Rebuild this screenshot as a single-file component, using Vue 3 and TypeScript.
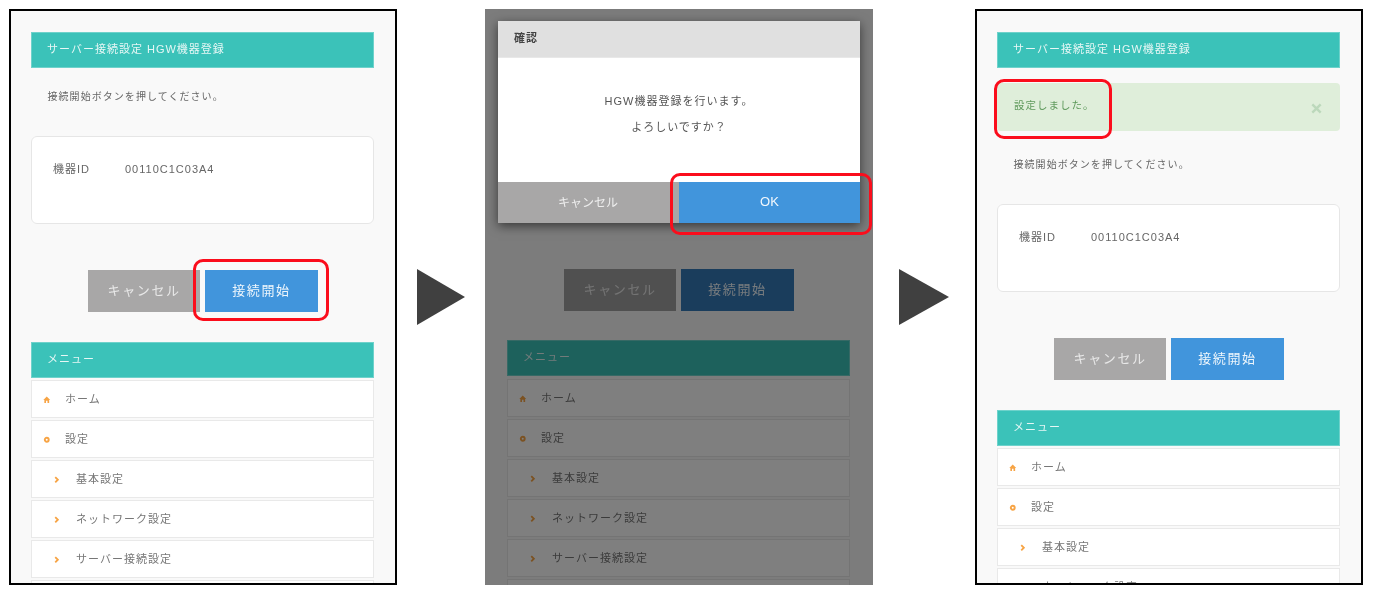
<script setup lang="ts">
type Item = { label: string; icon: 'home' | 'gear' | 'chev' }
const menu: Item[] = [
  { label: 'ホーム', icon: 'home' },
  { label: '設定', icon: 'gear' },
  { label: '基本設定', icon: 'chev' },
  { label: 'ネットワーク設定', icon: 'chev' },
  { label: 'サーバー接続設定', icon: 'chev' },
  { label: '', icon: 'chev' },
]
const panels = [
  { id: 'start', dim: false, alert: false },
  { id: 'confirm', dim: true, alert: false },
  { id: 'done', dim: false, alert: true },
]
</script>

<template>
  <div class="page">
    <template v-for="(p, i) in panels" :key="p.id">
      <div v-if="i > 0" class="arrow" :class="{ wide: i === 2 }"></div>
      <section class="panel" :class="{ dim: p.dim }">
        <div class="bar">サーバー接続設定 HGW機器登録</div>
        <div v-if="p.alert" class="alert">
          <span>設定しました。</span>
          <svg class="close" viewBox="0 0 10 10"><path d="M1.2 1.2 8.8 8.8M8.8 1.2 1.2 8.8" /></svg>
        </div>
        <p class="lead">接続開始ボタンを押してください。</p>
        <div class="card">
          <span class="key">機器ID</span><span class="val">00110C1C03A4</span>
        </div>
        <div class="actions">
          <button class="btn gray">キャンセル</button>
          <button class="btn blue">接続開始</button>
        </div>
        <div class="bar menu-bar">メニュー</div>
        <ul class="menu">
          <li v-for="(m, k) in menu" :key="k" :class="{ sub: m.icon === 'chev' }">
            <svg class="ico" viewBox="0 0 10 10">
              <path v-if="m.icon === 'home'" d="M5 .8 9.6 5.2H8.2V9.4H6V6.4H4V9.4H1.8V5.2H.4Z" fill="#f7a445" />
              <circle v-else-if="m.icon === 'gear'" cx="5" cy="5" r="2.6" fill="none" stroke="#f7a445" stroke-width="2.6" />
              <path v-else d="M3 1.5 6.5 5 3 8.5" fill="none" stroke="#f7a445" stroke-width="2.4" />
            </svg>
            <span>{{ m.label }}</span>
          </li>
        </ul>
        <template v-if="p.dim">
          <div class="shade"></div>
          <div class="dialog">
            <div class="dlg-head">確認</div>
            <div class="dlg-body">
              <p>HGW機器登録を行います。</p>
              <p>よろしいですか？</p>
            </div>
            <div class="dlg-foot">
              <button class="dlg-btn gray">キャンセル</button>
              <button class="dlg-btn blue">OK</button>
            </div>
          </div>
          <div class="mark mark-ok"></div>
        </template>
        <div v-if="p.id === 'start'" class="mark mark-start"></div>
        <div v-if="p.alert" class="mark mark-alert"></div>
      </section>
    </template>
  </div>
</template>

<style>
body {
  background: #fff;
}
</style>

<style scoped>
.page {
  display: flex;
  align-items: center;
  width: 1376px;
  height: 600px;
  box-sizing: border-box;
  padding: 9px 0 15px 9px;
  font-family: "Liberation Sans", "Noto Sans CJK JP", sans-serif;
  font-size: 11px;
  letter-spacing: 1px;
  color: #707070;
}
.panel {
  position: relative;
  flex: none;
  width: 388px;
  height: 576px;
  box-sizing: border-box;
  overflow: hidden;
  padding: 21px 21.5px 0 20px;
  border: 2px solid #000;
  background: #f9f9f9;
}
.panel > * {
  filter: blur(0.3px);
}
.panel.dim {
  padding: 21px 23.5px 0 22px;
  border: 0;
}
.arrow {
  flex: none;
  width: 48px;
  height: 56px;
  margin: 0 20px;
  background: #404040;
  clip-path: polygon(0 0, 100% 50%, 0 100%);
}
.arrow.wide {
  width: 50px;
  margin: 0 26px;
}
.bar {
  height: 36px;
  line-height: 34px;
  padding-left: 16px;
  background: #3bc2b9;
  color: #e6f7f5;
  box-shadow: inset 0 0 0 1px #6ed2cb;
}
.lead {
  margin: 0;
  height: 68px;
  padding: 21px 0 0 16.5px;
  box-sizing: border-box;
  line-height: 16px;
  font-size: 10px;
  letter-spacing: 1.05px;
  color: #666;
}
.alert {
  display: flex;
  align-items: center;
  justify-content: space-between;
  height: 48px;
  margin-top: 15px;
  padding: 0 18px 6px 17px;
  box-sizing: border-box;
  border-radius: 4px;
  background: #dfeeda;
  color: #5f9a5c;
  font-size: 10.5px;
}
.alert + .lead {
  height: 73px;
  padding-top: 26px;
}
.close {
  width: 11px;
  height: 11px;
  margin-top: 8px;
}
.close path {
  fill: none;
  stroke: #bcd8bb;
  stroke-width: 2.2;
}
.card {
  height: 88px;
  padding: 24px 0 0 21px;
  box-sizing: border-box;
  background: #fff;
  border: 1.5px solid #e6e6e6;
  border-radius: 6px;
  line-height: 16px;
  color: #666;
}
.key {
  display: inline-block;
  width: 72px;
}
.actions {
  display: flex;
  justify-content: center;
  gap: 4.6px;
  padding-left: 1px;
  margin: 46px 0 30px;
}
.dim .actions {
  margin: 47px 0 29px;
}
.btn {
  width: 112.7px;
  height: 42px;
  padding: 0 0 4px;
  border: 0;
  font: inherit;
  font-size: 13px;
  letter-spacing: 1.6px;
  color: #e8e8e8;
}
.gray {
  background: #a8a7a7;
}
.blue {
  background: #4195dc;
  color: #eef6fc;
}
.dim .btn.gray {
  background: #a0a0a0;
}
.dim .btn.blue {
  background: #347ab8;
}
.mark {
  position: absolute;
  box-sizing: border-box;
  border: 3.8px solid #fb0d1c;
  border-radius: 10px;
  pointer-events: none;
}
.mark-start {
  left: 182px;
  top: 248px;
  width: 136px;
  height: 62px;
}
.mark-alert {
  left: 16.5px;
  top: 68px;
  width: 118px;
  height: 60px;
}
.mark-ok {
  left: 184.5px;
  top: 164px;
  width: 202px;
  height: 62px;
}
.menu-bar {
  line-height: 35px;
  margin-bottom: 2px;
}
.dim .menu-bar {
  margin-bottom: 3px;
}
.menu {
  list-style: none;
  margin: 0;
  padding: 0;
  display: flex;
  flex-direction: column;
  gap: 2px;
}
.menu li {
  display: flex;
  align-items: center;
  flex: none;
  height: 38px;
  box-sizing: border-box;
  padding: 0 0 2px 11px;
  background: #fff;
  border: 1.5px solid #e9e9e9;
  font-size: 11px;
  color: #777;
}
.menu li.sub {
  padding-left: 20.5px;
}
.ico {
  flex: none;
  width: 7.5px;
  height: 7.5px;
  margin: 4px 14.5px 0 0;
}
.sub .ico {
  margin-right: 16px;
}
.shade {
  position: absolute;
  inset: 0;
  background: rgba(0, 0, 0, 0.5);
}
.dialog {
  position: absolute;
  left: 13px;
  top: 12px;
  width: 362px;
  background: #fff;
  box-shadow: 0 3px 10px rgba(0, 0, 0, 0.55);
}
.dlg-head {
  height: 37px;
  line-height: 34px;
  padding-left: 16px;
  background: #e0e0e0;
  color: #444;
  font-weight: 700;
  border-bottom: 1px solid #e8e8e8;
  box-sizing: border-box;
}
.dlg-body {
  height: 124px;
  padding-top: 35px;
  box-sizing: border-box;
  text-align: center;
  color: #555;
}
.dlg-body p {
  margin: 0 0 10px;
  line-height: 16px;
}
.dlg-foot {
  display: flex;
  gap: 1px;
  height: 41px;
  background: #a8a7a7;
}
.dlg-btn {
  flex: 1;
  padding: 0 0 3px;
  border: 0;
  font: inherit;
  font-size: 12px;
  color: #eee;
}
.dlg-btn.gray {
  flex: none;
  width: 180px;
}
.dlg-btn.blue {
  font-size: 13px;
  color: #f2f8fd;
}
</style>
